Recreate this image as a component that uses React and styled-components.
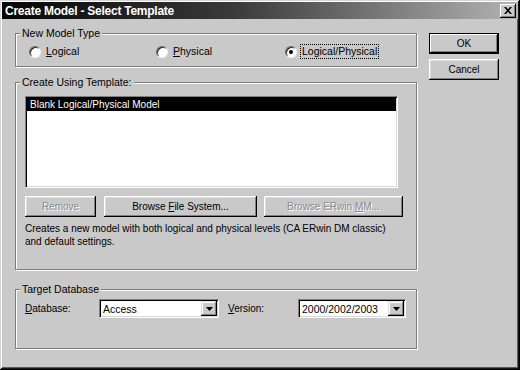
import React from "react";
import styled, { createGlobalStyle } from "styled-components";

const Global = createGlobalStyle`
  html, body { margin: 0; padding: 0; background: #c9c9c9; }
  body { font-family: "Liberation Sans", Arial, sans-serif; font-size: 10px; color: #000; }
  * { box-sizing: border-box; }
`;

const Window = styled.div`
  width: 520px;
  height: 370px;
  padding: 2px;
  background: #c9c9c9;
  box-shadow: inset -1px -1px #000, inset 1px 1px #d6d6d6, inset -2px -2px #1a1a1a, inset 2px 2px #fff,
    inset -3px -3px #5a5a5a;
  display: flex;
  flex-direction: column;
`;

const TitleBar = styled.div`
  height: 17px;
  background: linear-gradient(to right, #050505 0%, #3a3a3a 45%, #b3b3b3 100%);
  display: flex;
  align-items: center;
  justify-content: space-between;
  padding: 0 2px 0 3px;
`;

const Title = styled.span`
  color: #fff;
  font-weight: bold;
  font-size: 12px;
  letter-spacing: -0.25px;
`;

const CloseButton = styled.div`
  width: 16px;
  height: 14px;
  background: #c9c9c9;
  box-shadow: inset -1px -1px #000, inset 1px 1px #fff, inset -2px -2px #808080;
  display: flex;
  align-items: center;
  justify-content: center;
  padding-bottom: 1px;
`;

const Body = styled.div`
  display: flex;
  align-items: flex-start;
  padding: 8px 0 0 13px;
`;

const Main = styled.div`
  width: 402px;
  display: flex;
  flex-direction: column;
`;

const Group = styled.fieldset`
  margin: ${(p) => p.$mt || 0}px 0 0 0;
  padding: ${(p) => p.$pad};
  border: 1px solid #7c7c7c;
  box-shadow: 1px 1px 0 #fff, inset 1px 1px 0 #fff;
  min-width: 0;
`;

const Legend = styled.legend`
  margin-left: -5px;
  padding: 0 2px;
  line-height: 13px;
  height: 13px;
  font-size: 10.5px;
  background: #c9c9c9;
`;

const RadioRow = styled.div`
  display: grid;
  grid-template-columns: 127px 129px auto;
  padding-left: 4px;
`;

const RadioItem = styled.div`
  display: flex;
  align-items: center;
  gap: 4px;
  height: 13px;
`;

const RadioCircle = styled.span`
  width: 12px;
  height: 12px;
  border-radius: 50%;
  background: #fff;
  border: 1px solid;
  border-color: #6a6a6a #f4f4f4 #f4f4f4 #6a6a6a;
  box-shadow: inset 1px 1px 0 #222;
  display: flex;
  align-items: center;
  justify-content: center;
`;

const Dot = styled.span`
  width: 4px;
  height: 4px;
  border-radius: 50%;
  background: #000;
`;

const RadioText = styled.span`
  line-height: 13px;
  font-size: 10.5px;
  padding: 0 1px;
  outline: ${(p) => (p.$focus ? "1px dotted #000" : "none")};
`;

const ListBox = styled.div`
  width: 373px;
  height: 92px;
  background: #fff;
  border: 1px solid;
  border-color: #808080 #fff #fff #808080;
  box-shadow: inset 1px 1px 0 #000, inset -1px -1px 0 #d8d8d8;
  padding: 1px;
`;

const ListRow = styled.div`
  height: 13px;
  line-height: 13px;
  background: #000;
  color: #fff;
  padding-left: 3px;
`;

const ButtonRow = styled.div`
  display: flex;
  margin-top: 8px;
  gap: 8px;
`;

const Button = styled.div`
  width: ${(p) => p.$w}px;
  height: 21px;
  margin-left: ${(p) => p.$ml || 0}px;
  flex: none;
  display: flex;
  align-items: center;
  justify-content: center;
  background: #c9c9c9;
  color: ${(p) => (p.$disabled ? "#8a8a8a" : "#000")};
  text-shadow: ${(p) => (p.$disabled ? "1px 1px 0 #fff" : "none")};
  border: ${(p) => (p.$default ? "1px solid #000" : "none")};
  box-shadow: ${(p) =>
    p.$default
      ? "inset -1px -1px #000, inset 1px 1px #fff, inset -2px -2px #808080"
      : "inset -1px -1px #000, inset 1px 1px #fff, inset -2px -2px #808080, inset 2px 2px #dcdcdc"};
`;

const Desc = styled.div`
  margin-top: 5px;
  line-height: 13px;
`;

const ComboRow = styled.div`
  display: flex;
  align-items: center;
`;

const FieldLabel = styled.span`
  width: ${(p) => p.$w}px;
  margin-left: ${(p) => p.$ml || 0}px;
  flex: none;
`;

const Combo = styled.div`
  width: ${(p) => p.$w}px;
  height: 19px;
  flex: none;
  background: #fff;
  border: 1px solid;
  border-color: #808080 #fff #fff #808080;
  box-shadow: inset 1px 1px 0 #000, inset -1px -1px 0 #d8d8d8;
  padding: 1px;
  display: flex;
  align-items: center;
`;

const ComboText = styled.span`
  flex: 1;
  padding-left: 2px;
  font-size: 10.5px;
`;

const ArrowButton = styled.span`
  width: 16px;
  height: 15px;
  background: #c9c9c9;
  box-shadow: inset -1px -1px #000, inset 1px 1px #dcdcdc, inset -2px -2px #808080, inset 2px 2px #fff;
  display: flex;
  align-items: center;
  justify-content: center;
`;

const Side = styled.div`
  margin-left: 12px;
  padding-top: 6px;
  display: flex;
  flex-direction: column;
  gap: 5px;
`;

const Arrow = () => (
  <svg width="7" height="4" viewBox="0 0 7 4">
    <path d="M0 0h7L3.5 4z" fill="#000" />
  </svg>
);

const Radio = ({ checked, focus, children }) => (
  <RadioItem>
    <RadioCircle>{checked && <Dot />}</RadioCircle>
    <RadioText $focus={focus}>{children}</RadioText>
  </RadioItem>
);

export default function App() {
  return (
    <>
      <Global />
      <Window>
        <TitleBar>
          <Title>Create Model - Select Template</Title>
          <CloseButton>
            <svg width="8" height="7" viewBox="0 0 8 7">
              <path d="M0 0h2l2 2.2L6 0h2L5 3.5 8 7H6L4 4.8 2 7H0l3-3.5z" fill="#000" />
            </svg>
          </CloseButton>
        </TitleBar>
        <Body>
          <Main>
            <Group $pad="5px 12px 8px 9px">
              <Legend>New Model Type</Legend>
              <RadioRow>
                <Radio>
                  <u>L</u>ogical
                </Radio>
                <Radio>
                  <u>P</u>hysical
                </Radio>
                <Radio checked focus>
                  Logical/Physical
                </Radio>
              </RadioRow>
            </Group>
            <Group $mt={9} $pad="7px 12px 21px 9px">
              <Legend>Create Using Template:</Legend>
              <ListBox>
                <ListRow>Blank Logical/Physical Model</ListRow>
              </ListBox>
              <ButtonRow>
                <Button $w={71} $disabled>
                  Remove
                </Button>
                <Button $w={153}>
                  Browse&nbsp;<u>F</u>ile System...
                </Button>
                <Button $w={139} $ml={-1} $disabled>
                  Browse ERwin&nbsp;<u>M</u>M...
                </Button>
              </ButtonRow>
              <Desc>
                Creates a new model with both logical and physical levels (CA ERwin DM classic)
                <br />
                and default settings.
              </Desc>
            </Group>
            <Group $mt={13} $pad="3px 12px 30px 9px">
              <Legend>Target Database</Legend>
              <ComboRow>
                <FieldLabel $w={74}>
                  <u>D</u>atabase:
                </FieldLabel>
                <Combo $w={120}>
                  <ComboText>Access</ComboText>
                  <ArrowButton>
                    <Arrow />
                  </ArrowButton>
                </Combo>
                <FieldLabel $w={70} $ml={9}>
                  <u>V</u>ersion:
                </FieldLabel>
                <Combo $w={108}>
                  <ComboText>2000/2002/2003</ComboText>
                  <ArrowButton>
                    <Arrow />
                  </ArrowButton>
                </Combo>
              </ComboRow>
            </Group>
          </Main>
          <Side>
            <Button $w={70} $default>
              OK
            </Button>
            <Button $w={70}>Cancel</Button>
          </Side>
        </Body>
      </Window>
    </>
  );
}
